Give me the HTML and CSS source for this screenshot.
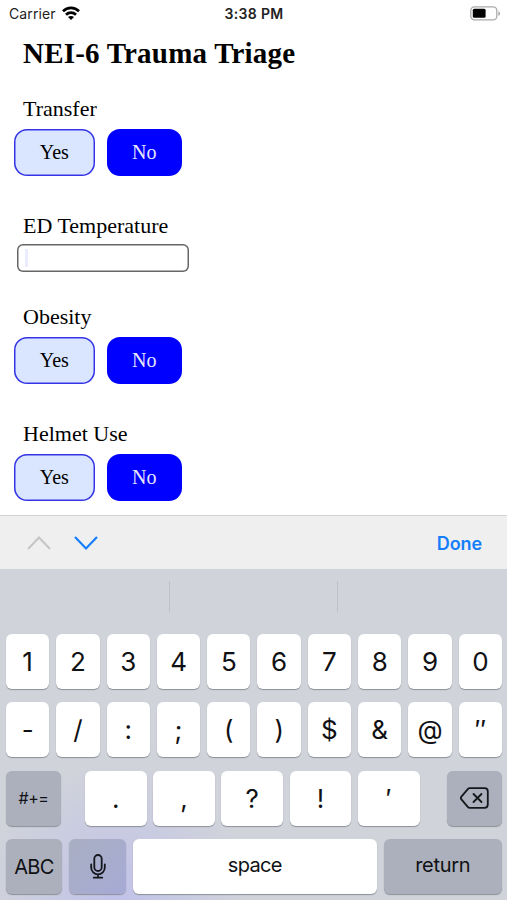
FILE: index.html
```html
<!DOCTYPE html>
<html lang="en">
<head>
<meta charset="utf-8">
<title>NEI-6 Trauma Triage</title>
<link rel="stylesheet" href="styles.css">
</head>
<body>
<div class="phone">
  <header class="status">
    <div class="carrier">Carrier
      <svg class="wifi" width="18" height="14" viewBox="0 0 18 14" fill="none" stroke="#000" stroke-width="2.7"><path d="M1 5.2C5.4.7 12.6.7 17 5.2"/><path d="M4 8.8c2.8-2.8 7.2-2.8 10 0"/><path d="M9 14 6 11.1c1.7-1.6 4.3-1.6 6 0z" fill="#000" stroke="none"/></svg>
    </div>
    <div class="time">3:38 PM</div>
    <svg class="battery" width="31" height="15" viewBox="0 0 31 15"><rect x=".8" y=".8" width="26" height="13" rx="3.6" fill="#fff" stroke="#aaa" stroke-width="1.3"/><rect x="2.8" y="2.8" width="12.8" height="9" rx="1.5"/><path d="M28.3 5.2c2.4.8 2.4 3.8 0 4.6z" fill="#aaa"/></svg>
  </header>
  <main class="form">
    <h1>NEI-6 Trauma Triage</h1>
    <section class="field first">
      <h2>Transfer</h2>
      <div class="choices"><button class="yes">Yes</button><button class="no">No</button></div>
    </section>
    <section class="field temp">
      <h2>ED Temperature</h2>
      <div class="entry"><span class="caret"></span></div>
    </section>
    <section class="field">
      <h2>Obesity</h2>
      <div class="choices"><button class="yes">Yes</button><button class="no">No</button></div>
    </section>
    <section class="field">
      <h2>Helmet Use</h2>
      <div class="choices"><button class="yes">Yes</button><button class="no">No</button></div>
    </section>
  </main>
  <nav class="accessory">
    <svg width="24" height="16" viewBox="0 0 24 16" fill="none" stroke="#c5c5c7" stroke-width="2"><path d="M1 14 12 2.5 23 14"/></svg>
    <svg width="24" height="16" viewBox="0 0 24 16" fill="none" stroke="#147efb" stroke-width="2.2"><path d="M1 2l11 11.5L23 2"/></svg>
    <span class="done">Done</span>
  </nav>
  <div class="keyboard">
    <div class="suggestions"><i></i><i></i><i></i></div>
    <div class="keys ten"><b>1</b><b>2</b><b>3</b><b>4</b><b>5</b><b>6</b><b>7</b><b>8</b><b>9</b><b>0</b></div>
    <div class="keys ten"><b>-</b><b>/</b><b>:</b><b>;</b><b>(</b><b>)</b><b>$</b><b>&amp;</b><b>@</b><b class="quote">″</b></div>
    <div class="keys punct"><b class="dark sym">#+=</b><b class="mark">.</b><b class="mark">,</b><b class="mark">?</b><b class="mark">!</b><b class="mark">′</b><b class="dark del"><svg width="29" height="22" viewBox="0 0 29 22" fill="none" stroke="#15171c" stroke-width="1.8" stroke-linejoin="round" stroke-linecap="round"><path d="M9.8 1.2H24.5q3.3 0 3.3 3.3v13q0 3.3-3.3 3.3H9.8q-1.2 0-2-.9L1.4 12.3q-1.1-1.3 0-2.6L7.8 2.1q.8-.9 2-.9z"/><path d="m13.5 7 8 8m0-8-8 8"/></svg></b></div>
    <div class="keys bottom"><b class="dark abc">ABC</b><b class="dark mic"><svg width="16" height="25" viewBox="0 0 16 25" fill="none" stroke="#15171c" stroke-width="1.8" stroke-linecap="round"><rect x="4.3" y="1" width="7.4" height="16" rx="3.7"/><path d="M1.2 10.5v3a6.8 6.8 0 0 0 13.6 0v-3M8 20.3v3.2M3.8 23.7h8.4"/></svg></b><b class="word space">space</b><b class="dark word return">return</b></div>
  </div>
</div>
</body>
</html>
```
FILE: styles.css
```css
* { box-sizing: border-box; }
body { margin: 0; background: #fff; color: #000; }
.phone { width: 507px; height: 900px; overflow: hidden; display: flex; flex-direction: column; }
.status { height: 28px; flex: none; display: grid; grid-template-columns: 1fr auto 1fr; align-items: center; padding: 0 6px 0 9px; font: 14px/28px Inter, sans-serif; color: #222; }
.carrier { display: flex; align-items: center; gap: 6px; letter-spacing: .1px; }
.wifi { margin-top: -2px; }
.time { margin-right: 2px; font-weight: 600; font-size: 14px; letter-spacing: .35px; }
.battery { justify-self: end; margin-top: -2px; }
.form { height: 487px; flex: none; font-family: "Liberation Serif", serif; }
h1 { margin: 8px 0 0 23px; font-size: 29px; line-height: 34px; letter-spacing: .2px; }
h2 { margin: 0 0 0 23px; font-size: 22px; line-height: 26px; font-weight: 400; }
.field { margin-top: 37px; }
.field.first { margin-top: 26px; }
.choices { display: flex; gap: 12px; padding: 7px 0 0 14px; }
button { height: 47px; padding: 0; border: 0; border-radius: 13px; font: 20px "Liberation Serif", serif; }
.yes { width: 80.5px; background: #dae6ff; color: #000; box-shadow: inset 0 0 0 1.5px #3434e6; }
.no { width: 75.5px; background: #00f; color: #e6e6ff; }
.entry { width: 172.5px; height: 28px; margin: 5px 0 0 16.5px; box-shadow: inset 0 0 0 1.5px #666; border-radius: 6px; padding: 5px 8px; }
.caret { display: block; width: 3px; height: 18px; background: #ebecff; }
.temp + .field { margin-top: 32px; }
.accessory { height: 54px; flex: none; border-top: 1px solid #d2d2d3; background: #efeff0; display: flex; align-items: center; gap: 23px; padding: 0 25px 0 27px; }
.done { margin-left: auto; padding-top: 1px; color: #147efb; font: 600 18px Inter, sans-serif; letter-spacing: -.1px; }
.keyboard { flex: 1; padding: 0 5px 0 6px; color: #101114; font-family: Inter, sans-serif; background: radial-gradient(circle at 115px 325px, #c1c2e9 0, transparent 130px), #d0d3da; }
.suggestions { height: 64.5px; margin: 0 -5px 0 -6px; padding-top: 12px; display: grid; grid-template-columns: 169.5px 168.5px 1fr; }
.suggestions i { height: 31px; border-right: 1px solid #bfc1c6; }
.suggestions i:last-child { border: 0; }
.keys { display: grid; height: 55px; margin-bottom: 13.5px; gap: 7px; }
.keys b { display: flex; align-items: center; justify-content: center; background: #fff; border-radius: 6px; box-shadow: 0 1px 1px #8d9097; font-weight: 400; font-size: 26px; }
.ten { grid-template-columns: repeat(10, 1fr); }
.punct { grid-template-columns: 55px 11px repeat(5, 1fr) 14.5px 55px; column-gap: 6.5px; }
.punct .mark:nth-child(2) { grid-column: 3; }
.punct .del { grid-column: 9; }
.bottom { grid-template-columns: 56px 57px 243.5px 1fr; }
.keys .dark { background: #abb0bc; }
.keys .mic { background: linear-gradient(135deg, #a9afc2, #a6aad6); }
.keys .sym { font-size: 16px; letter-spacing: -.4px; }
.keys .abc { font-size: 20px; letter-spacing: -.6px; }
.keys .word { font-size: 20px; padding-bottom: 3px; letter-spacing: -.7px; }
.keys .return { letter-spacing: -.3px; }
.keys .quote { letter-spacing: -.5px; }
```
